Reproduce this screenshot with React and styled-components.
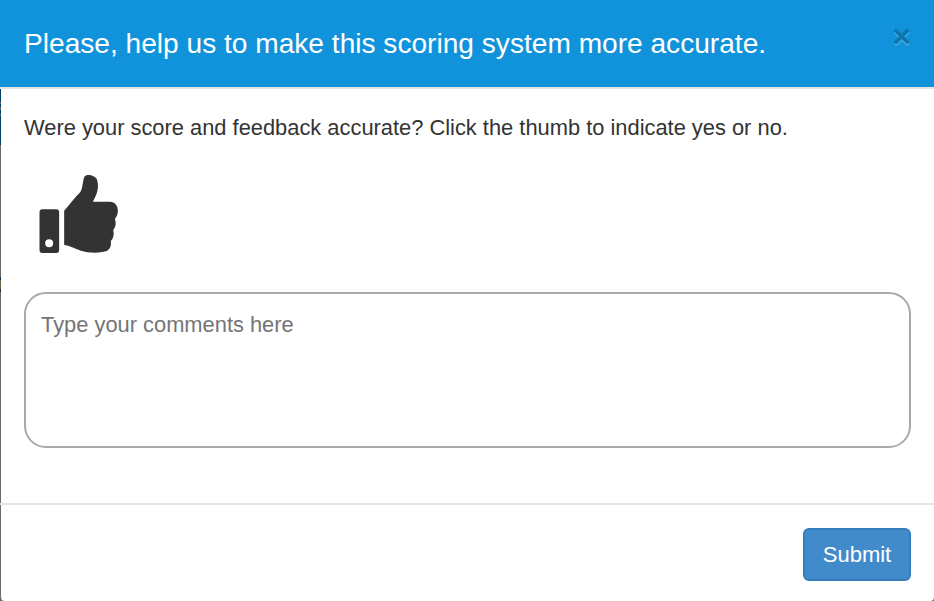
import React from 'react';
import styled, { createGlobalStyle } from 'styled-components';

const GlobalStyle = createGlobalStyle`
  * { box-sizing: border-box; }
  body {
    margin: 0;
    font-family: 'Liberation Sans', Arial, sans-serif;
    color: #333;
  }
`;

const Backdrop = styled.div`
  width: 934px;
  height: 601px;
  overflow: hidden;
  background: linear-gradient(
    #003f66 0 102px,
    #5c6670 102px 104px,
    #003f66 104px 107px,
    #5c6670 107px 110px,
    #003f66 110px 114px,
    #5c6670 114px 116px,
    #003f66 116px 145px,
    #6b6b6b 145px 277px,
    #14324a 277px 280px,
    #6b6250 280px 289px,
    #14324a 289px 292px,
    #6b6b6b 292px
  );
`;

const Modal = styled.div`
  display: flex;
  flex-direction: column;
  height: 601px;
`;

const Header = styled.header`
  display: flex;
  justify-content: space-between;
  height: 89px;
  padding: 26px 23px 0 24px;
  background: #1193db;
  border-bottom: 2px solid #e5e5e5;
`;

const Title = styled.h4`
  margin: 0;
  color: #fff;
  font-size: 28.11px;
  font-weight: 400;
  line-height: 36px;
`;

const CloseButton = styled.button`
  height: 32px;
  margin-top: -6px;
  padding: 0;
  border: 0;
  background: none;
  color: #000;
  font: bold 32px/32px 'Liberation Sans', Arial, sans-serif;
  text-shadow: 0 2px 0 #fff;
  opacity: 0.2;
  cursor: pointer;
`;

const Body = styled.main`
  display: flex;
  flex: 1;
  flex-direction: column;
  align-items: flex-start;
  margin-left: 1px;
  padding: 23px 23px 0;
  background: #fff;
`;

const Question = styled.p`
  margin: 0;
  font-size: 21.86px;
  line-height: 32px;
`;

const ThumbButton = styled.button`
  display: block;
  width: 79px;
  height: 79px;
  margin: 30px 0 39px 15px;
  padding: 0;
  border: 0;
  background: none;
  color: #333;
  cursor: pointer;

  svg {
    display: block;
    overflow: visible;
  }
`;

const Comments = styled.textarea`
  display: block;
  width: 100%;
  height: 156px;
  padding: 17px 15px;
  border: 2px solid #a9a9a9;
  border-radius: 22px;
  background: #fff;
  font: 21.86px/28px 'Liberation Sans', Arial, sans-serif;
  resize: none;

  &::placeholder { color: #757575; }
`;

const Footer = styled.footer`
  height: 98px;
  border-top: 2px solid #e5e5e5;
`;

const FooterContent = styled.div`
  display: flex;
  align-items: flex-start;
  justify-content: flex-end;
  height: 96px;
  margin-left: 1px;
  padding: 23px 23px 0;
  background: #fff;
  border-radius: 0 0 4px 4px;
`;

const SubmitButton = styled.button`
  width: 108px;
  height: 53px;
  padding: 0;
  border: 2px solid #357ebd;
  border-radius: 6px;
  background: #428bca;
  color: #fff;
  font: 22px 'Liberation Sans', Arial, sans-serif;
  cursor: pointer;
`;

const ThumbIcon = () => (
  <svg width="79" height="79" viewBox="56.5 41 237 237" fill="currentColor">
    <path
      fillRule="evenodd"
      d="M67 147H108Q117 147 117 156V269Q117 278 108 278H67Q58 278 58 269V156Q58 147 67 147ZM87 237A12 12 0 1 0 87 261A12 12 0 1 0 87 237Z"
    />
    <path d="M132 151C147 135 164 111 180 96C189 83 187 57 194 48C203 40 224 46 230 57C239 82 229 105 218 124H269C285 124 293 136 293 151C293 163 289 169 284 176C289 188 286 202 279 209C283 223 279 235 272 242C274 257 269 269 257 273C235 279 203 278 182 271C163 265 148 255 132 254Z" />
  </svg>
);

const App = () => (
  <>
    <GlobalStyle />
    <Backdrop>
      <Modal>
        <Header>
          <Title>Please, help us to make this scoring system more accurate.</Title>
          <CloseButton aria-label="Close">×</CloseButton>
        </Header>
        <Body>
          <Question>Were your score and feedback accurate? Click the thumb to indicate yes or no.</Question>
          <ThumbButton aria-label="Thumbs up">
            <ThumbIcon />
          </ThumbButton>
          <Comments placeholder="Type your comments here" />
        </Body>
        <Footer>
          <FooterContent>
            <SubmitButton>Submit</SubmitButton>
          </FooterContent>
        </Footer>
      </Modal>
    </Backdrop>
  </>
);

export default App;
